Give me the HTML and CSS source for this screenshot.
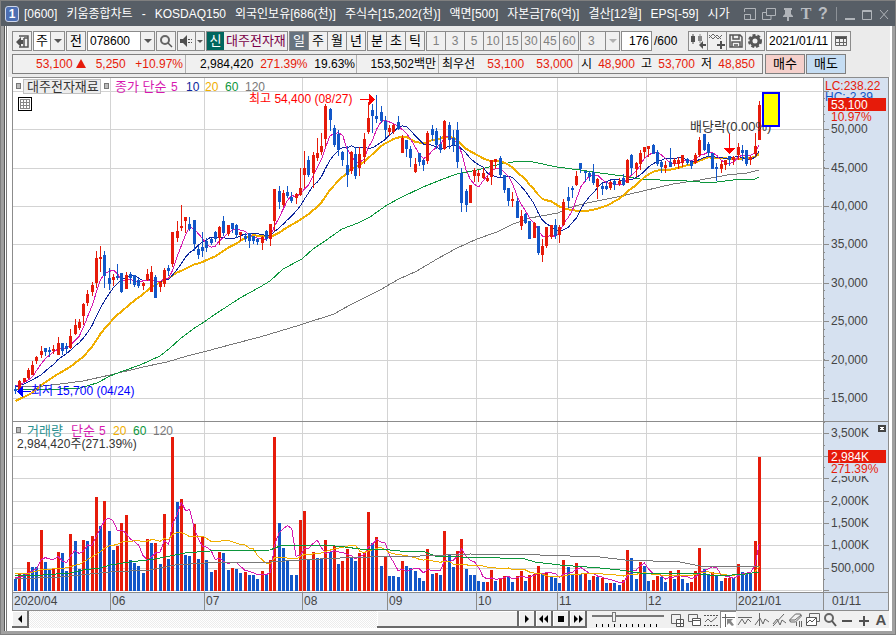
FILE: index.html
```html
<!DOCTYPE html>
<html lang="ko">
<head>
    <meta charset="UTF-8">
    <meta name="viewport" content="width=device-width, initial-scale=1.0">
    <title>[0600] 키움종합차트</title>
    <link rel="stylesheet" href="styles.css">
</head>
<body>
<div class="window">
    <header class="titlebar">
        <span class="win-no">1</span>
        <h1 class="title">
            <span>[0600]</span><span>키움종합차트</span><span>-</span><span>KOSDAQ150</span><span>외국인보유[686(천)]</span><span>주식수[15,202(천)]</span><span>액면[500]</span><span>자본금[76(억)]</span><span>결산[12월]</span><span>EPS[-59]</span><span>시가</span>
        </h1>
        <div class="win-tools">
            <button aria-label="크기"><svg width="14" height="14"><path d="M2 1.5h10.500v11H1.500V7.500M1.500 5V1.500M1.500 7.500h6v5" /></svg></button>
            <button aria-label="복사"><svg width="14" height="14"><path d="M4.500 1.500h9v7h-9zM4 5.500H.5v7h8.500V9" /></svg></button>
            <button aria-label="고정"><svg width="14" height="14"><path class="solid" d="M3 1h8v2h-1v4l2 2v1H8v4H6v-4H2V9l2-2V3H3z" /></svg></button>
            <button aria-label="글자" class="serif">T</button>
            <button aria-label="도움말" class="mark">?</button>
            <span class="bar"></span>
            <button aria-label="최소화"><svg width="12" height="14"><path class="solid" d="M1 11h10v2H1z" /></svg></button>
            <button aria-label="최대화"><svg width="12" height="14"><path d="M1.500 3.500h9v9h-9zM1 4.500h10" /></svg></button>
            <button aria-label="닫기"><svg width="12" height="14"><path d="M2 3l8 9M10 3l-8 9" /></svg></button>
        </div>
    </header>

    <div class="body">
        <div class="toolbar">
            <button class="btn" aria-label="메뉴"><svg width="14" height="14"><path class="line2" d="M4 2h9v11H4M9 4v9M9 4h4" /><path class="dark" d="M1 8l5-5v3h2v4H6v3z" /></svg></button>
            <div class="combo w32">
                <select aria-label="종목구분"><option>주</option></select>
                <span class="drop"></span>
            </div>
            <button class="btn">전</button>
            <div class="combo w68">
                <input type="text" aria-label="종목코드" value="078600">
                <button class="drop" aria-label="목록"></button>
            </div>
            <button class="btn" aria-label="검색"><svg width="14" height="14"><circle class="ring" cx="6" cy="6" r="4" /><path class="line2" d="M9 9l4 4" /></svg></button>
            <div class="combo w28">
                <button class="flat" aria-label="소리"><svg width="14" height="14"><path class="dark" d="M1 5h3l4-4v12L4 9H1zM9 5h2v1H9zM12 5h1v1h-1zM9 8h2v1H9zM12 8h1v1h-1z" /></svg></button>
                <button class="drop small" aria-label="소리 설정"></button>
            </div>
            <div class="name-box"><span class="credit">신</span><span class="name">대주전자재</span></div>
            <div class="group">
                <button class="on">일</button><button>주</button><button>월</button><button>년</button>
            </div>
            <div class="group">
                <button>분</button><button>초</button><button>틱</button>
            </div>
            <div class="group minutes">
                <button>1</button><button>3</button><button>5</button><button>10</button><button>15</button><button>30</button><button>45</button><button>60</button>
            </div>
            <div class="combo w40 off">
                <select aria-label="분"><option>3</option></select>
                <span class="drop"></span>
            </div>
            <div class="combo w30"><input class="right" type="text" aria-label="봉 개수" value="176"></div>
            <span class="total">/600</span>
            <div class="group icons">
                <button aria-label="차트 추가"><svg width="18" height="18"><path class="dark" d="M2 4h4v6H2zM3.500 2h1v10h-1z" /><path class="mid" d="M9 4h4v5H9zM10.500 2h1v9h-1z" /><path class="dark" d="M10 13l4-4v3h3v2h-3v3z" /></svg></button>
                <button aria-label="지표 추가"><svg width="18" height="18"><path class="line1" d="M1 6l4-4 5 5 4-4M1 3l4 4 4-4 4 4" /><path class="dark" d="M12 9h2v3h3v2h-3v3h-2v-3H9v-2h3z" /></svg></button>
                <button aria-label="저장"><svg width="16" height="16"><path class="line2" d="M2 2h10l2 2v10H2zM5 2v4h6V2M4 14V9h8v5M6 12h4" /></svg></button>
                <button aria-label="설정"><svg width="16" height="16"><circle class="gear" cx="8" cy="8" r="6" /><circle class="ring gearbody" cx="8" cy="8" r="4" /></svg></button>
            </div>
            <div class="combo w85">
                <input type="text" aria-label="날짜" value="2021/01/11">
                <button class="flat" aria-label="달력"><svg width="14" height="14"><path class="dark" d="M1 2h12v3H1z" /><path class="line1" d="M1.500 2.500h11v9h-11zM5.500 5v6M9.500 5v6M1 8.500h12" /></svg></button>
            </div>
        </div>

        <div class="quote">
            <div class="cells">
                <div class="cell c1"><span class="up">53,100 <i class="tri"></i></span><span class="up">5,250</span><span class="up">+10.97%</span></div>
                <div class="cell c2"><span>2,984,420</span><span class="up">271.39%</span><span>19.63%</span></div>
                <div class="cell c3"><span>153,502백만</span></div>
                <div class="cell c4"><span>최우선</span><span class="up">53,100</span><span class="up">53,000</span></div>
                <div class="cell c5"><span>시</span><span class="up">48,900</span><span>고</span><span class="up">53,700</span><span>저</span><span class="up">48,850</span></div>
            </div>
            <button class="trade buy">매수</button>
            <button class="trade sell">매도</button>
        </div>

        <svg class="chart" viewBox="12 77 877 534" role="img" aria-label="대주전자재료 일봉 차트">
            <rect class="axis-bg" x="823" y="78" width="65" height="532" />
            <rect class="axis-bg" x="13" y="592" width="875" height="18" />
            <g id="grid"></g>
            <g id="volume"></g>
            <g id="price"></g>
            <g id="axis"></g>

            <!-- 가격 범례 -->
            <g class="legend">
                <rect class="dot" x="16.500" y="83.500" width="4" height="5" />
                <rect class="chip" x="23.500" y="79.500" width="77" height="14" />
                <text class="ko" x="27" y="91">대주전자재료</text>
                <rect class="dot" x="104.500" y="83.500" width="4" height="5" />
                <text class="ma5 ko" x="115" y="91">종가 단순</text>
                <text class="ma5" x="171" y="91">5</text>
                <text class="ma10" x="186" y="91">10</text>
                <text class="ma20" x="205" y="91">20</text>
                <text class="ma60" x="225" y="91">60</text>
                <text class="ma120" x="245" y="91">120</text>
                <path class="table-icon" d="M18.500 97.500h13v13h-13z" />
                <path class="table-lines" d="M20.500 99.500h9v9h-9zM20 102.500h10M20 105.500h10M23.500 99v10M26.500 99v10" />
            </g>

            <!-- 거래량 범례 -->
            <g class="legend">
                <rect class="dot" x="16.500" y="427.500" width="4" height="5" />
                <text class="vol ko" x="27" y="435">거래량</text>
                <text class="ma5 ko" x="71" y="435">단순</text>
                <text class="ma5" x="99" y="435">5</text>
                <text class="ma20" x="113" y="435">20</text>
                <text class="ma60" x="133" y="435">60</text>
                <text class="ma120" x="153" y="435">120</text>
                <text x="17" y="448">2,984,420주(271.39%)</text>
            </g>

            <!-- 최고 / 최저 / 배당락 -->
            <text class="high" x="249" y="103">최고 54,400 (08/27)</text>
            <path class="high-line" d="M360 99.500h10" /><path class="high" d="M369 94l6 5.500-6 5.500z" />
            <text class="low" x="31" y="395">최저 15,700 (04/24)</text>
            <path class="low-line" d="M20 391.500h11" /><path class="low" d="M17 391.500l6-6v12z" />
            <text class="exdiv ko" x="690" y="131">배당락(0.00%)</text>
            <path class="high-line" d="M729.500 134v14" /><path class="high" d="M724 148h11l-5.500 6z" />
            <rect class="marker" x="763" y="93" width="16" height="33" />

            <!-- 현재가 -->
            <text class="up" x="825" y="90">LC:238.22</text>
            <text class="down" x="825" y="101">HC:-2.39</text>
            <text class="up" x="831" y="121">10.97%</text>
            <rect class="now" x="828" y="98" width="58" height="13" />
            <text class="now-text" x="831" y="109">53,100</text>
            <rect class="axis-bg" x="829" y="466" width="50" height="10" />
            <text class="up" x="831" y="473">271.39%</text>
            <rect class="now" x="828" y="450" width="58" height="13" />
            <text class="now-text" x="831" y="461">2,984K</text>
            <rect class="close" x="878" y="425" width="8" height="7" />
            <path class="close-x" d="M880.500 427l3 3M883.500 427l-3 3" />

            <path class="frame" d="M12.500 77.500h876v533h-876zM12 421.500h877M12 592.500h876M823.500 77v533" />
        </svg>

        <div class="bottom">
            <button class="sb" aria-label="왼쪽"><svg width="14" height="12"><path class="black" d="M5 6l4-4v8z" /></svg></button>
            <div class="trough"><div class="thumb"></div></div>
            <button class="sb" aria-label="오른쪽"><svg width="14" height="12"><path class="black" d="M9 6L5 2v8z" /></svg></button>
            <button class="sb" aria-label="뒤로"><svg width="14" height="12"><path class="black" d="M2 6l4-4v8zM7 6l4-4v8z" /></svg></button>
            <button class="sb" aria-label="정지"><svg width="14" height="12"><path class="black" d="M4 3h6v6H4z" /></svg></button>
            <button class="sb" aria-label="앞으로"><svg width="14" height="12"><path class="black" d="M7 6L3 2v8zM12 6L8 2v8z" /></svg></button>
            <div class="slider">
                <input type="range" aria-label="확대" min="0" max="10" value="3">
                <span class="ticks"></span>
            </div>
            <div class="tools">
                <button aria-label="창 추가"><svg width="16" height="16"><path class="line1" d="M2.500 2.500h9v9h-9z" /><path class="fillw" d="M7.500 7.500h7v7h-7zM11.500 8v6M8 11.500h6" /></svg></button>
                <button aria-label="창 겹침"><svg width="16" height="16"><path class="line1" d="M2.500 2.500h9v7h-9z" /><path class="fillw" d="M6.500 6.500h8v7h-8zM7 8.500h7" /></svg></button>
                <button aria-label="영역"><svg width="16" height="16"><path class="dash" d="M1 3.500h14M1 13.500h14" /><path class="line1" d="M2 10l3-3 3 3 6-5" /></svg></button>
                <button class="pressed" aria-label="십자선"><svg width="16" height="16"><path class="line1" d="M5.500 2v13M2 5.500h13" /><path class="mid" d="M7 7h6l-2 2 3 4-2 1-3-3-2 2z" /></svg></button>
                <button aria-label="수평선"><svg width="16" height="16"><path class="line1" d="M1 5.500h14M1 13l4-6 3 5 3-5 3 3" /></svg></button>
                <button aria-label="수직선"><svg width="16" height="16"><path class="line1" d="M5.500 1v13M1 13l5-7 3 6 2-5 4 3" /></svg></button>
                <button aria-label="추세선"><svg width="16" height="16"><path class="line1" d="M2 14L13 2M2 12l4-5 3 6 2-5 4 3" /></svg></button>
                <button aria-label="지우개"><svg width="16" height="16"><path class="line1" d="M1.500 8l6-6h5l1 2-6 6h-5zM2 8h5l6-5M8.500 10v4M11.500 9v6M13.500 9v6" /></svg></button>
                <button aria-label="비교"><svg width="16" height="16"><path class="line1" d="M4.500 5V1.500h10v8h-3" /><path class="fillw" d="M1.500 5.500h10v8h-10zM2 11l3-3 2 2 4-4" /></svg></button>
                <button aria-label="돋보기"><svg width="16" height="16"><circle class="ring" cx="7" cy="6" r="4" /><path class="line2" d="M10 9l4 5" /></svg></button>
                <button aria-label="축소"><svg width="16" height="16"><path class="dark" d="M3 8h10v2H3z" /></svg></button>
                <button aria-label="확대"><svg width="16" height="16"><path class="dark" d="M7 4h2v4h4v2H9v4H7v-4H3V8h4z" /></svg></button>
                <button class="letter" aria-label="글자 크기">A</button>
            </div>
        </div>
    </div>
</div>
<script src="script.js"></script>
</body>
</html>
```
FILE: styles.css
```css
* {
    box-sizing: border-box;
}
body {
    margin: 0;
    background: #fff;
    font-family: "Liberation Sans", "Noto Sans CJK KR", sans-serif;
    font-size: 12px;
    line-height: 16px;
    color: #000;
}
button, input, select {
    font: inherit;
    color: inherit;
    margin: 0;
    padding: 0;
    border: 0;
    border-radius: 0;
    background: none;
    appearance: none;
}
svg {
    display: block;
}
.window {
    min-height: 100vh;
    display: flex;
    flex-direction: column;
    border: 1px solid #7f7f7f;
}

/* title bar */
.titlebar {
    height: 25px;
    display: flex;
    align-items: center;
    padding: 0 5px 0 4px;
    background: #575e66;
    color: #fff;
}
.win-no {
    width: 14px;
    height: 16px;
    margin-right: 5px;
    border: 1px solid #cdd6ea;
    border-radius: 3px;
    background: #4d6fb3;
    font-weight: bold;
    line-height: 14px;
    text-align: center;
}
.title {
    flex: 1;
    min-width: 0;
    display: flex;
    gap: 9px;
    margin: 0;
    overflow: hidden;
    white-space: nowrap;
    font-size: 12px;
    font-weight: normal;
}
.win-tools {
    display: flex;
    align-items: center;
    gap: 5px;
    padding-left: 6px;
    color: #b9bdc2;
}
.win-tools svg {
    fill: none;
    stroke: #b0b4b9;
}
.win-tools .solid {
    fill: #b0b4b9;
    stroke: none;
}
.serif {
    width: 12px;
    font: bold 16px "Liberation Serif", serif;
}
.mark {
    width: 12px;
    font-size: 16px;
    font-weight: bold;
}
.bar {
    width: 1px;
    height: 14px;
    margin: 0 2px;
    background: #8d9298;
}

/* frame */
.body {
    flex: 1;
    display: flex;
    flex-direction: column;
    padding: 0 3px 3px 8px;
    border: solid #a0a0a0;
    border-width: 0 3px 3px;
    background: linear-gradient(to right, #555 1px, #fff 1px, #fff 2px, #777 2px, #777 3px, #fff 3px);
}

/* toolbar */
.toolbar, .quote {
    display: flex;
    align-items: center;
    gap: 1px;
    margin: 0 -1px 0 -4px;
    padding-left: 4px;
    background: #ebebeb;
}
.toolbar {
    padding-top: 5px;
    white-space: nowrap;
}
.btn, .combo, .group, .name-box {
    flex: none;
    height: 20px;
    border: 1px solid #8b8b8b;
    background: #f0f0f0;
}
.btn {
    width: 20px;
    display: flex;
    align-items: center;
    justify-content: center;
    font-size: 13px;
}
.combo {
    display: flex;
    background: #fff;
}
.combo input, .combo select {
    flex: 1;
    width: 0;
    min-width: 0;
    padding: 0 2px;
}
.combo select {
    font-size: 13px;
}
.combo .right {
    text-align: right;
}
.w28 { width: 28px; }
.w30 { width: 31px; }
.w32 { width: 32px; }
.w40 { width: 40px; }
.w68 { width: 68px; }
.w85 { width: 85px; }
.drop {
    width: 14px;
    display: flex;
    align-items: center;
    justify-content: center;
    border-left: 1px solid #8b8b8b;
    background: #f0f0f0;
}
.drop.small {
    width: 10px;
}
.drop::after {
    content: "";
    border: solid transparent;
    border-width: 4px 4px 0;
    border-top-color: #555;
}
.drop.small::after {
    border-width: 3px 3px 0;
    border-top-color: #555;
}
.flat {
    width: 18px;
    display: flex;
    align-items: center;
    justify-content: center;
    background: #f0f0f0;
}
.w85 .flat {
    width: 19px;
    border-left: 1px solid #8b8b8b;
}
.off, .off select {
    background: #f0f0f0;
    color: #808080;
}
.combo.off select {
    padding-left: 7px;
    font-size: 12px;
}
.off .drop::after {
    border-top-color: #b0b0b0;
}
.name-box {
    width: 82px;
    display: flex;
    overflow: hidden;
    font-size: 13px;
    line-height: 18px;
}
.credit {
    width: 17px;
    background: #00665e;
    color: #fff;
    text-align: center;
}
.name {
    padding-left: 2px;
    color: #7a0048;
}
.group {
    display: flex;
}
.group button {
    width: 19px;
    display: flex;
    align-items: center;
    justify-content: center;
    border-left: 1px solid #8b8b8b;
    font-size: 13px;
}
.group button:first-child {
    width: 18px;
    border-left: 0;
}
.group .on {
    background: #67737f;
    color: #fff;
}
.group.minutes button {
    color: #808080;
    font-size: 12px;
}
.total {
    width: 34px;
    padding-left: 1px;
}
.toolbar svg, .tools svg {
    fill: none;
    stroke: none;
}
.dark { fill: #505050; }
.mid { fill: #888; }
.black { fill: #000; }
.line1 { stroke: #666; }
.line2 { stroke: #555; stroke-width: 2; }
.toolbar .line2 { stroke-width: 1.500; }
.ring { stroke: #666; stroke-width: 2; }
.gear { stroke: #555; stroke-width: 2; stroke-dasharray: 3 2; }
.gearbody { stroke: #555; stroke-width: 3; }
.dash { stroke: #555; stroke-dasharray: 2 1; }
.fillw { fill: #fff; stroke: #555; }

/* quote row */
.quote {
    padding-top: 3px;
    padding-bottom: 3px;
}
.cells {
    flex: 0 1 751px;
    display: flex;
    height: 20px;
    border: 1px solid #808080;
    background: #f0f0f0;
    line-height: 18px;
    white-space: nowrap;
}
.cell {
    display: flex;
    justify-content: space-between;
    padding: 0 5px 0 3px;
    border-left: 1px solid #b0b0b0;
}
.cell:first-child {
    border-left: 0;
}
.c1 { width: 172px; padding: 0 2px 0 23px; }
.c2 { width: 171px; padding: 0 1px 0 14px; }
.c3 { width: 82px; padding: 0 2px; justify-content: flex-end; }
.c4 { width: 140px; }
.c5 { flex: 1; padding: 0 7px 0 2px; }
.up { color: #e61b0a; fill: #e61b0a; }
.down { fill: #1257c8; }
.tri {
    display: inline-block;
    border: solid transparent;
    border-width: 0 5px 9px;
    border-bottom-color: #e61b0a;
}
.trade {
    width: 40px;
    height: 20px;
    margin-left: 1px;
    border: 1px solid #808080;
    font-size: 13px;
}
.trade + .trade {
    margin-left: 0;
}
.buy { background: #f5d0cb; }
.sell { background: #c5ddf3; }

/* chart */
.chart {
    width: 100%;
    height: auto;
    background: #fff;
    font-size: 12px;
}
.chart rect, .chart path, .chart polyline {
    shape-rendering: crispEdges;
}
.chart polyline {
    fill: none;
}
.chart .ko {
    font-size: 13px;
}
.axis-bg { fill: #d6e1f0; }
.frame { fill: none; stroke: #8c8c8c; }
.gridline { stroke: #d3d3d3; fill: none; }
.tick { stroke: #8c8c8c; fill: none; }
.label { fill: #444; }
.candle-up { fill: #e61b0a; }
.candle-down { fill: #1257c8; }
.line-5 { stroke: #d619b0; }
.line-10 { stroke: #0c259c; }
.line-20 { stroke: #f0ae00; stroke-width: 2; }
#volume .line-20 { stroke-width: 1; }
.line-60 { stroke: #0c963c; }
.line-120 { stroke: #787878; }
.legend text { fill: #333; }
.legend .ma5 { fill: #d619b0; }
.legend .ma10 { fill: #0c259c; }
.legend .ma20 { fill: #f0ae00; }
.legend .ma60 { fill: #0c963c; }
.legend .ma120 { fill: #787878; }
.legend .vol { fill: #2a9090; }
.dot { fill: #bbb; stroke: #777; }
.chip { fill: #ededed; stroke: #c0c0c0; }
.table-icon { fill: #fff; stroke: #000; }
.table-lines { fill: none; stroke: #888; }
.high { fill: #f00; }
.high-line { stroke: #f00; }
.low { fill: #00f; }
.low-line { stroke: #00f; }
.exdiv { fill: #333; }
.marker { fill: #ff0; stroke: #00f; stroke-width: 2; }
.now { fill: #e61b0a; }
.now-text { fill: #fff; }
.close { fill: #444; }
.close-x { stroke: #fff; }

/* bottom bar */
.bottom {
    display: flex;
    height: 17px;
    background: #f0f0f0;
}
.sb {
    width: 17px;
    display: flex;
    align-items: center;
    justify-content: center;
    border: solid #6a6a6a;
    border-width: 0 2px 2px 0;
    background: #f0f0f0;
    box-shadow: inset 1px 1px #fff;
}
.trough {
    flex: 1;
    display: flex;
    justify-content: flex-end;
    background: repeating-conic-gradient(#fff 0 25%, #ececec 0 50%) 0 0 / 2px 2px;
}
.thumb {
    width: 29%;
    border: solid #6a6a6a;
    border-width: 0 2px 2px 0;
    background: #f0f0f0;
    box-shadow: inset 1px 1px #fff;
}
.slider {
    width: 82px;
    display: flex;
    flex-direction: column;
    padding: 1px 5px 0;
}
.slider input {
    width: 100%;
    height: 10px;
    background: linear-gradient(transparent 3px, #777 3px, #777 5px, transparent 5px);
}
.slider input::-webkit-slider-thumb {
    appearance: none;
    width: 4px;
    height: 10px;
    border: 1px solid #777;
    background: #f0f0f0;
}
.ticks {
    height: 3px;
    margin: 2px 4px 0;
    background: repeating-linear-gradient(to right, #000 0 1px, transparent 1px 6px);
}
.tools {
    display: flex;
    gap: 1px;
}
.tools button {
    width: 16px;
}
.tools .pressed {
    background: #fff;
    box-shadow: inset 1px 1px #888;
}
.tools .letter {
    color: #505050;
    font-size: 15px;
    font-weight: bold;
}
```
FILE: script.js
```js
// 캔들: 색(r/b) 고가, 몸통 위, 몸통 아래, 저가
const candles = `
b385,389,390,393 r380,381,390,391 r378,378,381,381 r368,370,377,378 r361,365,374,374 r356,357,360,363 r346,351,354,357 b348,348,351,355
b347,350,351,356 r345,349,350,353 r337,343,354,354 b343,343,350,354 b343,346,348,352 r329,336,347,348 r319,325,333,334 r319,322,327,329
r303,304,315,324 r290,294,302,305 r282,285,291,295 r251,258,282,287 r246,257,258,271 b251,255,275,287 b268,278,283,289 r274,277,279,285
b264,276,277,279 b273,273,291,292 r272,275,288,288 b272,274,277,283 b275,275,284,286 b278,280,285,287 r282,283,285,289 r269,274,279,280
r266,272,291,291 b275,277,297,297 r281,282,286,291 r268,270,283,286 b265,268,270,275 r232,232,263,266 r221,231,237,241 r205,226,227,230
r217,217,220,232 b217,224,228,230 b220,220,243,250 b246,249,254,258 b232,247,250,256 b238,241,247,251 b238,239,242,244 b231,232,238,241
r226,227,237,244 b216,221,232,235 r225,225,233,235 b223,223,228,232 b224,225,234,237 r232,232,234,240 b233,236,238,241 b233,233,240,247
b236,236,240,243 b238,239,241,244 r236,237,242,249 b230,231,238,240 r224,224,238,245 r189,189,220,230 b186,191,201,208 r190,193,204,206
b186,192,195,197 b192,197,200,202 r193,194,197,203 r168,188,194,195 r151,168,174,187 b156,160,174,176 r152,155,172,187 r138,153,157,160
r133,146,151,154 r104,106,138,146 b108,109,119,130 b125,128,144,146 b130,134,149,155 b151,152,159,165 b146,165,174,186 r151,152,170,173
b147,154,175,178 r147,154,167,175 r133,139,156,163 r102,118,131,133 b104,110,115,132 b95,116,118,122 b106,112,120,122 b116,121,129,137
r125,128,131,135 r124,125,131,133 b116,122,128,129 r135,138,152,152 b140,140,148,156 b146,149,157,166 r158,164,171,172 b153,153,161,165
b159,160,164,170 r131,133,160,163 b125,129,134,140 b128,131,144,148 b136,144,149,152 r120,121,148,149 b122,125,139,148 b130,138,144,151
b122,130,161,167 b168,173,202,211 b189,191,204,211 r185,185,202,202 r168,170,175,181 r170,173,175,181 r168,173,177,178 r176,178,180,181
r160,160,176,184 r159,159,161,168 b156,158,174,176 b175,175,189,192 b188,188,200,205 r192,199,200,206 b198,201,217,217 r210,216,225,229
b213,214,222,223 b221,221,238,238 r222,223,237,237 b226,226,252,254 r239,246,254,261 r227,227,245,247 r225,225,236,238 b219,225,235,238
r225,227,234,242 r199,202,224,225 b187,197,200,207 b186,188,189,197 r171,176,184,185 b163,163,168,172 b171,171,172,181 b171,173,176,180
b164,172,182,184 r178,179,186,198 b183,186,188,194 b181,186,188,189 r181,182,187,189 b180,181,184,189 r178,181,183,185 b174,178,184,185
r159,160,182,182 b154,155,167,174 r162,163,168,176 r150,153,163,169 r147,147,151,157 r146,146,148,156 b144,145,153,153 b150,152,163,165
b161,162,166,172 r161,165,167,172 b148,162,166,166 r158,160,163,165 r157,160,163,168 r155,155,162,166 b158,159,162,164 b160,162,165,168
r153,155,162,163 r137,140,154,156 b134,134,149,150 b142,144,152,156 b153,153,168,168 b163,167,168,180 r161,164,168,172 r160,160,164,169
b156,156,159,165 r156,157,159,164 r143,147,154,159 b145,150,152,160 b150,150,163,165 r156,157,159,164 r133,146,153,155 r101,105,139,139`;

// 거래량 막대 높이
const volumes = `
b12 r18 b18 r29 b24 b24 r61 b29 b22 r22 r39 b38 b20 r57 b50 b22 r51 b50 r55 r94 b65 r90 b60 b41 r45 r68 r76 b31 b28 b25 b18 r52
b48 r48 b27 r77 b32 r154 b89 r92 b36 b35 r67 b32 r54 b31 b19 r21 r39 b38 b21 r23 b22 b18 r19 b16 b16 b12 r20 b16 r31 r154 b68 b43
b31 b16 b16 r71 r80 b31 r39 b33 b33 r51 b39 r45 b27 r30 r42 b33 b30 r38 r39 r79 b48 r54 b25 r34 b15 b15 b14 r30 b25 b23 b20 b13
b10 r42 b17 r18 b16 r60 b36 b24 r40 r52 b22 b16 b16 b10 b9 r9 r21 b10 r12 r15 b15 b9 r15 r20 b10 r16 r17 r25 b17 r18 b14 b13
b8 r31 b24 b17 r28 b17 r17 b11 r15 b14 r13 b8 r8 b8 b6 r11 r41 b33 b12 r29 b25 b10 r11 r15 b14 b9 r20 b12 r21 b12 b8 r9
r20 r43 b22 b17 r19 b15 b10 r13 r13 b13 r27 b19 b17 b17 r50 r134`;

const STEP = 4.25;
const BASE = 591;
const NS = 'http://www.w3.org/2000/svg';
const xOf = i => 15.5 + i * STEP;

function add(parent, tag, attrs, text) {
    const el = document.createElementNS(NS, tag);
    for (const key in attrs) el.setAttribute(key, attrs[key]);
    if (text) el.textContent = text;
    document.getElementById(parent).appendChild(el);
}

function line(parent, cls, points) {
    add(parent, 'polyline', { class: cls, points: points });
}

// 이동평균 (lead: 앞쪽 좌표)
function average(values, n, lead) {
    const pts = [lead];
    for (let i = n - 1; i < values.length; i++) {
        const part = values.slice(i - n + 1, i + 1);
        pts.push(xOf(i) + ',' + (part.reduce((a, b) => a + b) / n).toFixed(1));
    }
    return pts.join(' ');
}

// 격자
const priceRows = { 91: '', 129: '50,000', 168: '45,000', 206: '40,000', 244: '35,000', 283: '30,000', 321: '25,000', 360: '20,000', 398: '15,000' };
const volumeRows = { 433: '3,500K', 456: '', 478: '2,500K', 501: '2,000K', 523: '1,500K', 545: '1,000K', 568: '500,000', 590: '' };
const months = { 12: '2020/04', 110: '06', 204: '07', 302: '08', 387: '09', 476: '10', 557: '11', 646: '12', 736: '2021/01' };

for (const rows of [priceRows, volumeRows]) {
    for (const y in rows) {
        add('grid', 'path', { class: 'gridline', d: `M13 ${+y + 0.5}H822` });
        add('axis', 'path', { class: 'tick', d: `M823 ${+y + 0.5}h6` });
        if (rows[y]) add('axis', 'text', { class: 'label', x: 831, y: +y + 4 }, rows[y]);
    }
}
for (let y = 98.7; y < 420; y += 7.68) {
    add('axis', 'path', { class: 'tick', d: `M823 ${Math.floor(y) + 0.5}h2` });
}
for (const y of [422, 445, 467, 490, 512, 534, 557, 579]) {
    add('axis', 'path', { class: 'tick', d: `M823 ${y + 0.5}h2` });
}
for (const x in months) {
    if (x > 12) {
        add('grid', 'path', { class: 'gridline', d: `M${+x + 0.5} 78V592` });
        add('axis', 'path', { class: 'tick', d: `M${+x + 0.5} 592V610` });
    }
    add('axis', 'text', { class: 'label', x: +x + 2, y: 605 }, months[x]);
}
add('axis', 'text', { class: 'label', x: 832, y: 605 }, '01/11');

// 거래량
const vols = volumes.trim().split(/\s+/).map((v, i) => {
    const h = +v.slice(1);
    add('volume', 'rect', { class: v[0] === 'r' ? 'candle-up' : 'candle-down', x: Math.round(xOf(i) - 1.5), y: BASE - h, width: 3, height: h });
    return BASE - h;
});
line('volume', 'line-5', average(vols, 5, '15.5,578 24,576 28,573'));
line('volume', 'line-20', average(vols, 20, '15.5,574 30,573 40,570 65,568 80,564'));
line('volume', 'line-60', '15,576 43,575 70,573 83,570 100,568 110,565 130,562 155,559 170,556 185,553 210,551 270,550 280,546 325,545 345,547 360,549 380,549 400,551 425,552 435,556 460,557 500,558 525,559 535,562 560,565 600,568 620,570 640,573 680,573 700,574 720,576 745,574 759,572');
line('volume', 'line-120', '15,579 60,577 110,572 150,570 175,565 205,563 270,562 300,560 340,558 370,557 385,556 420,556 470,554 540,555 600,557 625,560 680,562 700,566 759,566');

// 가격
const bars = candles.trim().split(/\s+/).map(c => [c[0], ...c.slice(1).split(',').map(Number)]);
const closes = bars.map(b => b[0] === 'r' ? b[2] : b[3]);
line('price', 'line-120', '16,387 43,386 60,384 83,381 110,375 143,367 167,362 187,356 207,351 233,344 260,337 280,331 300,325 334,314 350,305 380,290 399,279 417,271 437,259 457,248 477,239 497,232 513,224 530,218 558,213 568,208 587,203 617,197 643,191 673,184 700,180 727,175 747,173 759,170');
line('price', 'line-60', '16,389 60,389 80,388 97,383 110,376 123,371 140,365 160,356 170,348 180,339 193,329 204,322 217,313 240,298 260,287 270,281 283,269 302,259 313,249 325,241 342,229 358,223 370,217 387,205 400,198 423,187 443,179 457,174 477,170 497,165 513,162 520,161 533,162 557,167 580,170 600,173 623,176 640,179 660,180 687,181 700,182 717,182 733,180 755,179 759,177');
line('price', 'line-20', average(closes, 20, '15.5,401 32,393 40,386 53,377 70,367 83,357 92,347'));
line('price', 'line-10', average(closes, 10, '15.5,387 24,384 32,380 41,375 49,368'));
line('price', 'line-5', average(closes, 5, '15.5,385 20,385 28,380'));
bars.forEach((b, i) => {
    const cls = b[0] === 'r' ? 'candle-up' : 'candle-down';
    const x = Math.round(xOf(i) - 1.5);
    add('price', 'rect', { class: cls, x: x + 1, y: b[1], width: 1, height: b[4] - b[1] + 1 });
    add('price', 'rect', { class: cls, x: x, y: b[2], width: 3, height: b[3] - b[2] + 1 });
});
```
